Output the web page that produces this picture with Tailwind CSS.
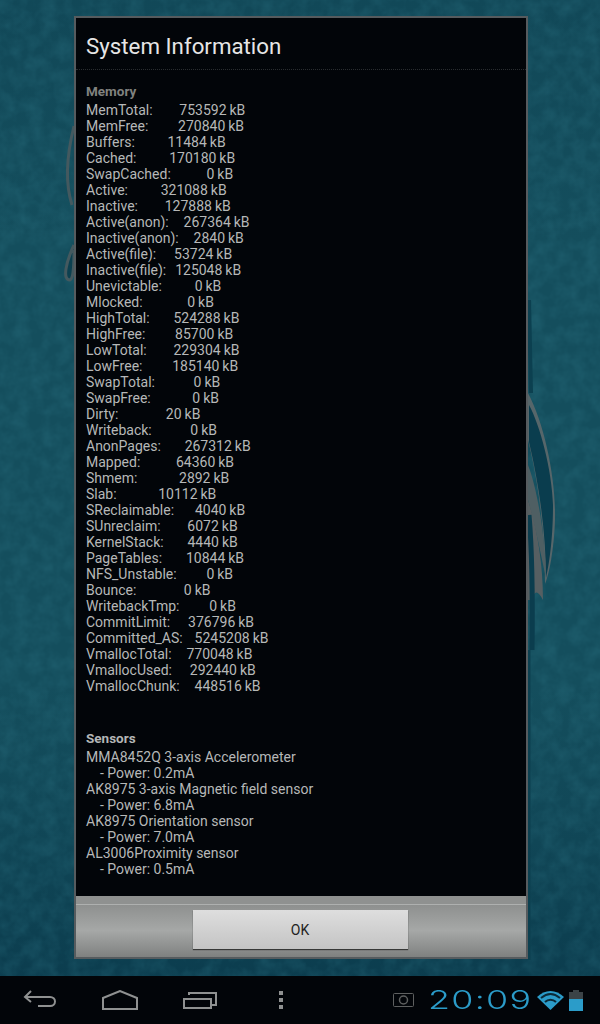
<!DOCTYPE html>
<html lang="en">

<head>
    <meta charset="UTF-8" />
    <meta name="viewport" content="width=device-width, initial-scale=1.0" />
    <title>System Information</title>
    <script src="https://cdn.jsdelivr.net/npm/@tailwindcss/browser@4"></script>
</head>

<body class="bg-[#020509] font-['Roboto',sans-serif] overflow-hidden">
    <div class="relative flex flex-col w-[600px] h-[1024px]">

        <!-- wallpaper -->
        <div class="relative flex-1 bg-[#144e5d] pt-[16px] pl-[74px]">
            <svg class="absolute inset-0" width="600" height="976" viewBox="0 0 600 976">
                <defs>
                    <filter id="grain" x="0" y="0" width="100%" height="100%">
                        <feTurbulence type="fractalNoise" baseFrequency="0.07" numOctaves="3" seed="4" />
                        <feColorMatrix values="0 0 0 0 0.04  0 0 0 0 0.24  0 0 0 0 0.31  0.4 0 0 0 -0.13" />
                    </filter>
                    <linearGradient id="shade" x1="0" y1="0" x2="0" y2="1">
                        <stop offset="0" stop-color="#0d3f50" stop-opacity="0.4" />
                        <stop offset="0.25" stop-color="#0d3f50" stop-opacity="0" />
                        <stop offset="0.7" stop-color="#0d3f50" stop-opacity="0" />
                        <stop offset="1" stop-color="#0a3a4c" stop-opacity="0.85" />
                    </linearGradient>
                </defs>
                <rect width="600" height="976" fill="url(#shade)" />
                <rect width="600" height="976" filter="url(#grain)" />
                <!-- swirls right -->
                <path d="M529 300L531 393" stroke="#0c4050" stroke-width="4" fill="none" />
                <path d="M528 393C545 425 556 480 555 520C554 550 549 575 545 584C545 530 538 480 528 440Z" fill="#56666a" />
                <path d="M529 405C540 425 552 470 553 505C553 540 549 565 546 578C546 530 538 480 529 442Z" fill="#0a3d4e" />
                <path d="M528 465C536 485 545 530 546 578C540 550 536 530 528 500Z" fill="#4f5f63" />
                <path d="M528 500C536 525 543 560 543 600C538 590 534 590 532 600L528 600Z" fill="#565f62" />
                <path d="M529 515C532 550 533 580 532 650" stroke="#0b3d4e" stroke-width="5" fill="none" />
                <path d="M529 650L529 960" stroke="#0c4050" stroke-width="3" fill="none" />
                <!-- swirls left -->
                <path d="M74 126C68 150 64 180 72 205" stroke="#44595f" stroke-width="3" fill="none" />
                <path d="M74 245C66 262 62 280 70 280C74 278 74 262 74 250" stroke="#44595f" stroke-width="3" fill="#0c4050" />
            </svg>

            <!-- dialog -->
            <div class="relative flex flex-col w-[454px] h-[943px] border-2 border-[#565b5e] bg-[#020509]">
                <div class="h-[52px] pl-[10px] flex items-center border-b border-dotted border-[#2a2d30]">
                    <h1 class="text-[22.3px] leading-none text-[#e6e6e6] pt-[5px]">System Information</h1>
                </div>
                <div class="flex-1 overflow-hidden pl-[10px] pt-[13px]">
                    <p class="text-[13.5px] leading-[16px] font-bold text-[#80827f]">Memory</p>
                    <div class="mt-[3px] text-[14px] leading-[16px] text-[#b6b8b8] whitespace-pre [word-spacing:-0.5px]">MemTotal:         753592 kB
MemFree:          270840 kB
Buffers:           11484 kB
Cached:           170180 kB
SwapCached:            0 kB
Active:           321088 kB
Inactive:         127888 kB
Active(anon):     267364 kB
Inactive(anon):     2840 kB
Active(file):      53724 kB
Inactive(file):   125048 kB
Unevictable:           0 kB
Mlocked:               0 kB
HighTotal:        524288 kB
HighFree:          85700 kB
LowTotal:         229304 kB
LowFree:          185140 kB
SwapTotal:             0 kB
SwapFree:              0 kB
Dirty:                20 kB
Writeback:             0 kB
AnonPages:        267312 kB
Mapped:            64360 kB
Shmem:              2892 kB
Slab:              10112 kB
SReclaimable:       4040 kB
SUnreclaim:         6072 kB
KernelStack:        4440 kB
PageTables:        10844 kB
NFS_Unstable:          0 kB
Bounce:                0 kB
WritebackTmp:          0 kB
CommitLimit:      376796 kB
Committed_AS:    5245208 kB
VmallocTotal:     770048 kB
VmallocUsed:      292440 kB
VmallocChunk:     448516 kB</div>
                    <p class="mt-[36px] text-[13.5px] leading-[16px] font-bold text-[#b4b6b6]">Sensors</p>
                    <div class="mt-[3px] text-[14px] leading-[16px] text-[#b6b8b8] whitespace-pre">MMA8452Q 3-axis Accelerometer
    - Power: 0.2mA
AK8975 3-axis Magnetic field sensor
    - Power: 6.8mA
AK8975 Orientation sensor
    - Power: 7.0mA
AL3006Proximity sensor
    - Power: 0.5mA</div>
                </div>
                <div class="h-[61px] flex justify-center pt-[14px] pr-[2px] bg-gradient-to-b from-[#8d8f8e] via-[#a6a8a7] to-[#7f8180] border-t-[8px] border-[#8f9190] shadow-[inset_0_1px_0_#aeb0af]">
                    <button class="w-[215px] h-[39px] -mt-[8px] pt-[2px] bg-gradient-to-b from-[#dedede] to-[#c4c4c4] text-[14px] text-[#222] shadow-[0_1px_1px_rgba(0,0,0,0.6)]">OK</button>
                </div>
            </div>
        </div>

        <!-- system bar -->
        <nav class="relative h-[48px] flex items-center bg-[#020509]">
            <svg class="ml-[23px]" width="34" height="20" viewBox="0 0 34 20" fill="none" stroke="#8f9191" stroke-width="2">
                <path d="M8 1L2 7L8 12M2 7H27C30 7 32 9 32 11.500C32 14 30 16 27 16H15" />
            </svg>
            <svg class="ml-[45px]" width="36" height="20" viewBox="0 0 36 20" fill="none" stroke="#8f9191" stroke-width="2">
                <path d="M1 19V8L18 1L35 8V19Z" />
            </svg>
            <svg class="ml-[45px]" width="36" height="20" viewBox="0 0 36 20" fill="none" stroke="#8f9191" stroke-width="2">
                <path d="M1 9H28V18H1Z" />
                <path d="M6 5V3H33V15H29" />
            </svg>
            <div class="ml-[60px] flex flex-col gap-[3px]">
                <span class="w-[4px] h-[4px] bg-[#8f9191]"></span>
                <span class="w-[4px] h-[4px] bg-[#8f9191]"></span>
                <span class="w-[4px] h-[4px] bg-[#8f9191]"></span>
            </div>
            <svg class="ml-[110px]" width="22" height="15" viewBox="0 0 22 15" fill="none" stroke="#5e6060" stroke-width="1">
                <rect x="0.500" y="0.500" width="20" height="13" rx="1" />
                <circle cx="10.500" cy="7" r="4" stroke-width="1.500" />
            </svg>
            <span class="ml-[13px] w-[109px] text-[28px] leading-none font-['Inter',sans-serif] font-light tracking-[1px] text-[#2b9cc9] origin-left scale-x-[1.28] scale-y-[0.9]">20:09</span>
            <svg class="shrink-0" width="27" height="20" viewBox="0 0 27 20">
                <path d="M0 7C8 -1 19 -1 27 7L13.500 20Z" fill="#2b9cc9" />
                <path d="M4 8C10 3 17 3 23 8M8 12C11 9 16 9 19 12" stroke="#0b2a38" stroke-width="2" fill="none" />
            </svg>
            <div class="ml-[5px] flex flex-col items-center">
                <span class="w-[6px] h-[2px] bg-[#3b4347]"></span>
                <div class="w-[14px] h-[19px] flex flex-col">
                    <span class="h-[7px] bg-[#3b4347]"></span>
                    <span class="flex-1 bg-[#2b9cc9]"></span>
                </div>
            </div>
        </nav>
    </div>
</body>

</html>
